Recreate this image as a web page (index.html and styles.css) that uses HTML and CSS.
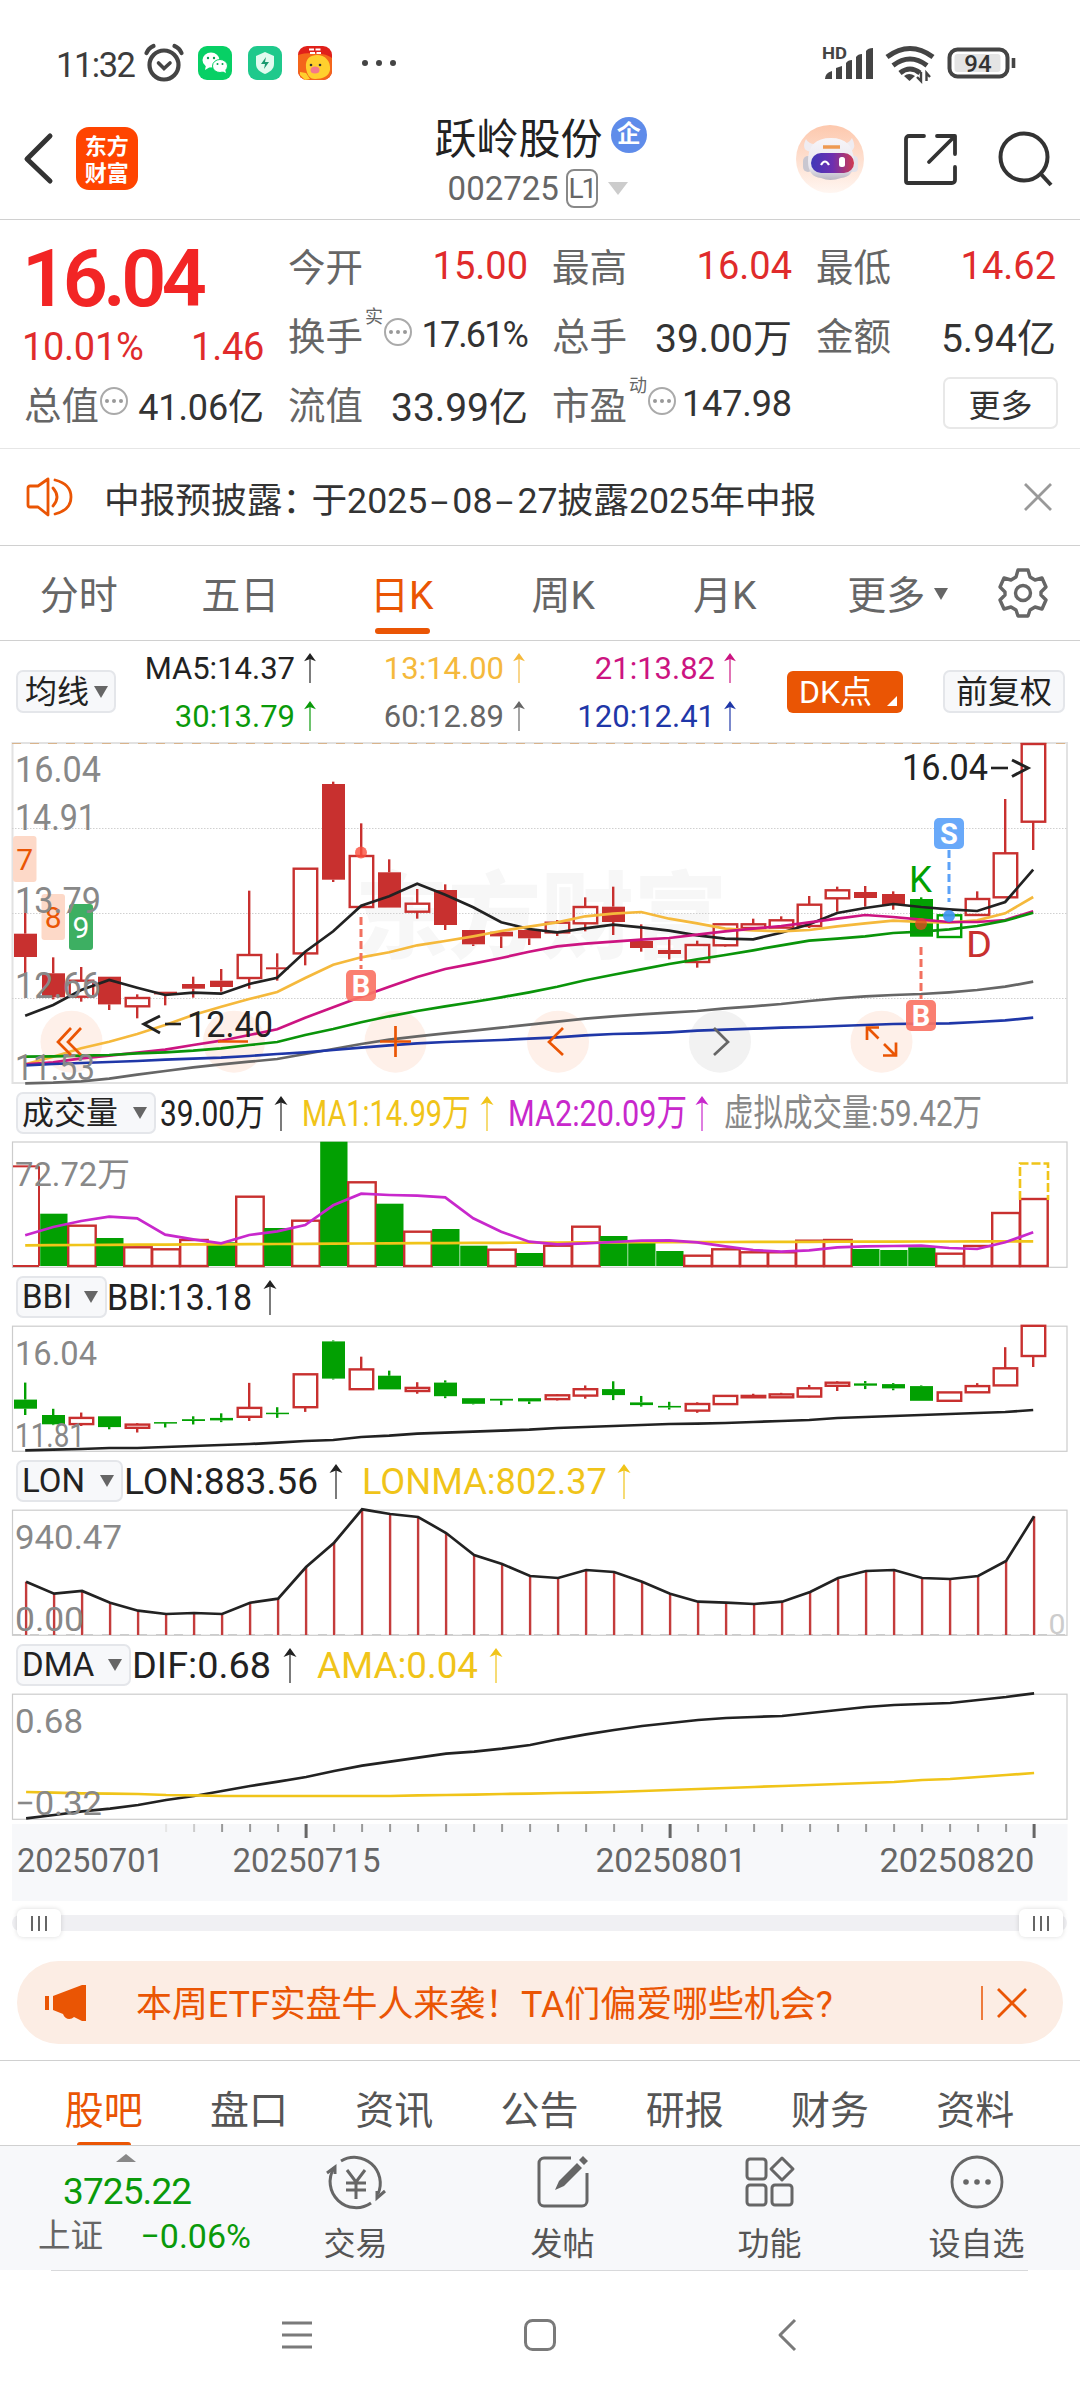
FILE: index.html
```
<!DOCTYPE html>
<html lang="zh-CN">

<head>
    <meta charset="utf-8">
    <title>跃岭股份 002725</title>
    <meta name="viewport" content="width=device-width, initial-scale=1">
    <link rel="stylesheet" href="styles.css">
</head>

<body>
    <div class="status-bar">
        <span class="time">11:32</span>
        <svg class="alarm" width="42" height="42" viewBox="0 0 42 42" fill="none" stroke="#444" stroke-width="4.200" stroke-linecap="round">
            <circle cx="21" cy="23" r="14.5"/>
            <path d="M15.500 21l5.500 5.500 6-5.500" stroke-width="3.600"/><path d="M3.500 11q2-5 7-7M38.500 11q-2-5-7-7"/>
        </svg>
        <svg class="app" width="34" height="34" viewBox="0 0 34 34">
            <rect width="34" height="34" rx="9" fill="#07d065"/>
            <ellipse cx="13" cy="14" rx="8.500" ry="7.500" fill="#fff"/>
            <path d="M8 19l-1 5 5-3z" fill="#fff"/>
            <ellipse cx="22" cy="20" rx="7.500" ry="6.500" fill="#fff" stroke="#07d065"/>
            <path d="M24 25l4 2-1-4z" fill="#fff"/>
            <g fill="#07a050"><circle cx="10" cy="12" r="1.200"/><circle cx="16" cy="12" r="1.200"/><circle cx="19.500" cy="18" r="1"/><circle cx="24.500" cy="18" r="1"/></g>
        </svg>
        <svg class="app" width="34" height="34" viewBox="0 0 34 34">
            <rect width="34" height="34" rx="9" fill="#1fc98c"/>
            <path d="M17 6l9 4v8c0 5-4 8-9 10-5-2-9-5-9-10v-8z" fill="#e2fbf0"/>
            <path d="M18 11l-5 7h4l-1 5 5-7h-4z" fill="#1a9a70"/>
        </svg>
        <svg class="app" width="34" height="34" viewBox="0 0 34 34">
            <rect width="34" height="34" rx="9" fill="#e0201a"/>
            <path d="M0 9C8 6 26 6 34 12v13a9 9 0 0 1-9 9H9a9 9 0 0 1-9-9z" fill="#f4661b"/>
            <path d="M8 22C7 12 13 9 19 9c8 0 14 6 13 15-1 6-7 9-15 9-6 0-8-5-9-11zM2 26l6 1 4 6-5 1-5-5z" fill="#ffd02e"/>
            <ellipse cx="17" cy="24" rx="4.500" ry="3.500" fill="#f5788a"/>
            <circle cx="13" cy="19" r="1.300" fill="#333"/><circle cx="22" cy="19" r="1.300" fill="#333"/>
            <path d="M11 3.500h13M12 7h11" stroke="#fff" stroke-width="2" stroke-dasharray="5 1.500"/>
        </svg>
        <svg class="dots" width="36" height="10" viewBox="0 0 36 10" fill="#444"><circle cx="5" cy="5" r="3"/><circle cx="19" cy="5" r="3"/><circle cx="33" cy="5" r="3"/></svg>
        <svg class="signals" width="200" height="44" viewBox="0 0 200 44">
            <text x="-1" y="18" class="hd" textLength="25" lengthAdjust="spacingAndGlyphs">HD</text>
            <path d="M2 38q0-6 7-8v8zM13 27l6-2v13h-6zM23 22q2-3 6-3v19h-6zM33 16q2-3 6-3v25h-6zM43 10q2-3 7-3v31h-7z" fill="#444"/>
            <g fill="none" stroke="#444" stroke-width="5">
                <path d="M64 16q23-17 46 0M70 24.500q17-13 34 0M77 32q10-8 20 0"/>
            </g>
            <path d="M81 35q5-4 11 0l-5.500 5z" fill="#444"/>
            <path d="M98 31v9l-4-4M103.500 40v-8l3.500 4" fill="none" stroke="#444" stroke-width="2.400"/>
            <rect x="126.500" y="8.500" width="58" height="27" rx="8" fill="#fff" stroke="#444" stroke-width="4"/>
            <rect x="131.500" y="13" width="46" height="18" rx="3" fill="#e4e4e4"/>
            <path d="M190.500 17v10" stroke="#444" stroke-width="3.600"/>
            <text x="155" y="31" class="batt" text-anchor="middle">94</text>
        </svg>
    </div>

    <div class="header">
        <svg class="back" width="32" height="54" viewBox="0 0 32 54" fill="none" stroke="#333" stroke-width="5" stroke-linecap="round" stroke-linejoin="round"><path d="M28 4L5 27l23 22"/></svg>
        <div class="logo">东方<br>财富</div>
        <div class="stock">
            <div class="stock-name">跃岭股份<span class="ent">企</span></div>
            <div class="stock-code">002725<span class="level">L1</span><i class="caret"></i></div>
        </div>
        <svg class="robot" width="68" height="68" viewBox="0 0 68 68">
            <defs>
                <linearGradient id="rb" x1="0" y1="0" x2="0" y2="1"><stop offset="0" stop-color="#fdc8ad"/><stop offset="1" stop-color="#fff6f1"/></linearGradient>
                <linearGradient id="rh" x1="0" y1="0" x2="0" y2="1"><stop offset="0" stop-color="#f7f5f8"/><stop offset=".7" stop-color="#e8e6ee"/><stop offset="1" stop-color="#b9b6c2"/></linearGradient>
                <linearGradient id="rf" x1="0" y1="0" x2="1" y2="0"><stop offset="0" stop-color="#3f37b8"/><stop offset=".5" stop-color="#6d2fb0"/><stop offset="1" stop-color="#d03a50"/></linearGradient>
            </defs>
            <circle cx="34" cy="34" r="34" fill="url(#rb)"/>
            <path d="M10 14q-6 12 6 13l5-8q-8 1-11-5zM56 13q6 12-4 14l-7-8q8 0 11-6z" fill="#efecf1"/>
            <rect x="7" y="31" width="10" height="16" rx="5" fill="#c9c7d0"/>
            <rect x="53" y="31" width="9" height="16" rx="4" fill="#e4e2ea"/>
            <path d="M12 36q0-23 23-23 22 0 23 23 0 16-13 17-11 4-20 0-13-1-13-17z" fill="url(#rh)"/>
            <rect x="15" y="28" width="43" height="20" rx="10" fill="url(#rf)"/>
            <path d="M27 22h17" stroke="#ee9a52" stroke-width="3.500"/>
            <path d="M25 40q4-7 8 0" fill="none" stroke="#fff" stroke-width="2.200"/>
            <rect x="43" y="32" width="6" height="10" rx="2.500" fill="#fff"/>
        </svg>
        <svg class="share" width="54" height="54" viewBox="0 0 54 54" fill="none" stroke="#333" stroke-width="3.800" stroke-linecap="round" stroke-linejoin="round"><path d="M21 4H6a3 3 0 0 0-3 3v42a2 2 0 0 0 2 2h44a3 3 0 0 0 3-3V35M34 4h18v18M51 5L26 30"/></svg>
        <svg class="search" width="56" height="56" viewBox="0 0 56 56" fill="none" stroke="#333" stroke-width="4"><circle cx="26" cy="26" r="23.500"/><path d="M42 42l11 12"/></svg>
    </div>

    <div class="quote">
        <div class="price-col">
            <div class="price">16.04</div>
            <div class="change"><span>10.01%</span><span>1.46</span></div>
            <div class="cell"><label>总值</label><i class="more-dot"><u></u><u></u><u></u></i><b class="tight">41.06亿</b></div>
        </div>
        <div class="grid">
            <div class="cell"><label>今开</label><b class="red">15.00</b></div>
            <div class="cell"><label>最高</label><b class="red">16.04</b></div>
            <div class="cell"><label>最低</label><b class="red">14.62</b></div>
            <div class="cell"><label>换手</label><sup>实</sup><i class="more-dot"><u></u><u></u><u></u></i><b class="tight narrow">17.61%</b></div>
            <div class="cell"><label>总手</label><b class="wide">39.00万</b></div>
            <div class="cell"><label>金额</label><b class="wide">5.94亿</b></div>
            <div class="cell"><label>流值</label><b class="wide">33.99亿</b></div>
            <div class="cell"><label>市盈</label><sup>动</sup><i class="more-dot"><u></u><u></u><u></u></i><b class="tight">147.98</b></div>
            <div class="cell"><button class="more">更多</button></div>
        </div>
    </div>

    <div class="notice">
        <svg width="48" height="40" viewBox="0 0 48 40" fill="none" stroke="#ea5504" stroke-width="2.800" stroke-linejoin="round"><path d="M22 2L12 9H4a2 2 0 0 0-2 2v17a2 2 0 0 0 2 2h8l10 8z"/><path d="M27 11q8 9 0 18M29 3q16 4 16 17t-16 17" stroke-linecap="round"/></svg>
        <p>中报预披露<span class="colon">：</span>于2025<span class="dash">-</span>08<span class="dash">-</span>27披露2025年中报</p>
        <svg width="28" height="28" viewBox="0 0 28 28" stroke="#999" stroke-width="2.800"><path d="M1 1l26 26M27 1L1 27"/></svg>
    </div>

    <div class="period-tabs">
        <span>分时</span><span>五日</span><span class="active">日K</span><span>周K</span><span>月K</span><span>更多<i class="caret"></i></span>
        <svg width="50" height="50" viewBox="0 0 50 50" fill="none" stroke="#666" stroke-width="3.400" stroke-linejoin="round"><circle cx="25" cy="25" r="7.500"/><path d="M20 2h10l2 7 5 3 7-2 4 9-5 5v3l5 5-4 9-7-2-5 3-2 6H20l-2-6-5-3-7 2-4-9 5-5v-3l-5-5 4-9 7 2 5-3z"/></svg>
    </div>

    <div class="ma-bar">
        <div class="pill">均线<i class="caret"></i></div>
        <div class="ma-list">
            <span class="c-black">MA5:14.37<svg class="up"><use href="#arrow"/></svg></span>
            <span class="c-yellow">13:14.00<svg class="up"><use href="#arrow"/></svg></span>
            <span class="c-pink">21:13.82<svg class="up"><use href="#arrow"/></svg></span>
            <span class="c-green">30:13.79<svg class="up"><use href="#arrow"/></svg></span>
            <span class="c-gray">60:12.89<svg class="up"><use href="#arrow"/></svg></span>
            <span class="c-blue">120:12.41<svg class="up"><use href="#arrow"/></svg></span>
        </div>
        <div class="dk">DK点</div>
        <div class="pill fq">前复权</div>
    </div>

    <svg class="defs" width="0" height="0"><symbol id="arrow" viewBox="0 0 14 34"><path d="M7 3v30" stroke="currentColor" stroke-width="1.300"/><path d="M7 0l6.500 9L7 6.500.500 9z" fill="currentColor"/></symbol></svg>

    <svg id="kline" width="1080" height="342" viewBox="0 742 1080 342"></svg>

    <div class="panel-head"><div class="pill">成交量<i class="caret"></i></div><svg id="volHead" class="legend" viewBox="156 1092 924 42"></svg></div>
    <svg id="vol" width="1080" height="126" viewBox="0 1142 1080 126"></svg>

    <div class="panel-head"><div class="pill">BBI<i class="caret"></i></div><svg id="bbiHead" class="legend" viewBox="107 1276 973 42"></svg></div>
    <svg id="bbi" width="1080" height="126" viewBox="0 1326 1080 126"></svg>

    <div class="panel-head"><div class="pill">LON<i class="caret"></i></div><svg id="lonHead" class="legend" viewBox="123 1460 957 42"></svg></div>
    <svg id="lon" width="1080" height="126" viewBox="0 1510 1080 126"></svg>

    <div class="panel-head"><div class="pill">DMA<i class="caret"></i></div><svg id="dmaHead" class="legend" viewBox="131 1644 949 42"></svg></div>
    <svg id="dma" width="1080" height="126" viewBox="0 1694 1080 126"></svg>

    <svg id="axis" width="1080" height="82" viewBox="0 1820 1080 82"></svg>

    <div class="slider">
        <div class="handle"><i></i><i></i><i></i></div>
        <div class="handle"><i></i><i></i><i></i></div>
    </div>

    <div class="banner">
        <svg width="44" height="38" viewBox="0 0 44 38" fill="#ea5504"><path d="M1 12h4v14H1zM9 12L38 1h4v36h-4l-8-4c-3 3-9 3-11-3L9 26z"/></svg>
        <p>本周ETF实盘牛人来袭！TA们偏爱哪些机会?</p>
        <svg class="close" width="48" height="36" viewBox="0 0 48 36" stroke="#ea5504" stroke-width="2.800"><path d="M1 1v34" stroke-width="1.500"/><path d="M17 4l28 28M45 4L17 32"/></svg>
    </div>

    <div class="info-tabs">
        <span class="active">股吧</span><span>盘口</span><span>资讯</span><span>公告</span><span>研报</span><span>财务</span><span>资料</span>
    </div>

    <div class="toolbar">
        <div class="index">
            <i class="caret-up"></i>
            <div class="index-value">3725.22</div>
            <div class="index-row"><span>上证</span><em>−0.06%</em></div>
        </div>
        <div class="tool">
            <svg width="62" height="56" viewBox="0 0 62 56" fill="none" stroke="#666" stroke-width="3"><path d="M16 7a26 26 0 0 1 37 33M46 49A26 26 0 0 1 9 14"/><path d="M2 19l8-6v7M60 37l-8 7v-7" /><path d="M22 16l9 12 9-12M31 28v17M21 29h20M21 36h20"/></svg>
            <span>交易</span>
        </div>
        <div class="tool">
            <svg width="56" height="56" viewBox="0 0 56 56" fill="none" stroke="#666" stroke-width="3"><path d="M36 4H9a5 5 0 0 0-5 5v38a5 5 0 0 0 5 5h38a5 5 0 0 0 5-5V19"/><path d="M20 36l4-9L42 9l5 5-18 18zM44 6l4-4 5 5-4 4z" fill="#666" stroke="none"/></svg>
            <span>发帖</span>
        </div>
        <div class="tool">
            <svg width="56" height="56" viewBox="0 0 56 56" fill="none" stroke="#666" stroke-width="3"><rect x="5" y="5" width="19" height="20" rx="3"/><rect x="5" y="31" width="19" height="20" rx="3"/><rect x="30" y="31" width="20" height="20" rx="3"/><path d="M40 4l11 11-11 11-11-11z" stroke-linejoin="round"/></svg>
            <span>功能</span>
        </div>
        <div class="tool">
            <svg width="56" height="56" viewBox="0 0 56 56" fill="none" stroke="#666" stroke-width="2.800"><circle cx="28" cy="28" r="25"/><g fill="#666" stroke="none"><circle cx="17" cy="28" r="2.800"/><circle cx="28" cy="28" r="2.800"/><circle cx="39" cy="28" r="2.800"/></g></svg>
            <span>设自选</span>
        </div>
    </div>

    <div class="sys-nav">
        <svg width="32" height="32" viewBox="0 0 32 32" stroke="#7a7a7a" stroke-width="3"><path d="M1 4h30M1 16h30M1 28h30"/></svg>
        <svg width="34" height="34" viewBox="0 0 34 34" fill="none" stroke="#7a7a7a" stroke-width="3"><rect x="2.500" y="2.500" width="29" height="29" rx="7"/></svg>
        <svg width="20" height="34" viewBox="0 0 20 34" fill="none" stroke="#7a7a7a" stroke-width="3" stroke-linejoin="round"><path d="M18 2L3 17l15 15"/></svg>
    </div>

    <script src="script.js"></script>
</body>

</html>
```
FILE: styles.css
```
* {
    box-sizing: border-box;
}

body {
    margin: 0;
    width: 1080px;
    height: 2400px;
    overflow: hidden;
    background: #fff;
    color: #333;
    font-family: Roboto, "Noto Sans CJK SC", sans-serif;
}

svg {
    display: block;
    flex: none;
    overflow: visible;
}

p {
    margin: 0;
}

i, em, b {
    font-style: normal;
    font-weight: normal;
}

text {
    font-family: Roboto, "Noto Sans CJK SC", sans-serif;
}

.defs {
    position: absolute;
}

.caret {
    display: inline-block;
    border: 7px solid transparent;
    border-top: 12px solid #666;
    border-bottom: 0;
}

/* status bar */
.status-bar {
    display: flex;
    align-items: center;
    height: 112px;
    padding: 14px 0 0 56px;
    color: #3c3c3c;
}

.time {
    width: 87px;
    font-size: 34.5px;
    letter-spacing: -1.5px;
    white-space: nowrap;
    padding-top: 3px;
}

.alarm {
    margin-right: 13px;
}

.app {
    margin-right: 16px;
}

.dots {
    margin-left: 12px;
}

.signals {
    margin-left: 427px;
}

.hd {
    font-size: 16px;
    font-weight: 700;
    fill: #444;
}

.batt {
    font-size: 24px;
    font-weight: 500;
    fill: #333;
}

/* header */
.header {
    display: flex;
    align-items: center;
    height: 108px;
    padding: 0 26px 14px 22px;
    border-bottom: 1px solid #d0d0d0;
}

.logo {
    width: 62px;
    height: 63px;
    margin-left: 22px;
    padding-top: 4px;
    border-radius: 13px;
    background: #ff4400;
    color: #fff;
    font: bold 22px/27px "Noto Sans CJK SC", sans-serif;
    text-align: center;
}

.stock {
    width: 300px;
    margin-left: 254px;
    padding-left: 43px;
}

.stock-name {
    display: flex;
    align-items: center;
    height: 50px;
    color: #222;
    font-size: 42px;
    white-space: nowrap;
}

.ent {
    width: 36px;
    height: 36px;
    margin: -1px 0 0 8px;
    border-radius: 50%;
    background: #5f8cea;
    color: #fff;
    font-size: 24px;
    font-weight: bold;
    line-height: 34px;
    text-align: center;
}

.stock-code {
    display: flex;
    align-items: center;
    height: 46px;
    margin-left: 13px;
    padding-top: 10px;
    color: #666;
    font-size: 33px;
}

.level {
    width: 32px;
    height: 39px;
    margin: 0 10px 0 7px;
    border: 2px solid #888;
    border-radius: 8px;
    font-size: 28px;
    line-height: 36px;
    letter-spacing: -2px;
    text-align: center;
}

.stock-code .caret {
    border-width: 13px 10px 0;
    border-top-color: #ccc;
}

.robot {
    margin-left: 106px;
}

.share {
    margin-left: 39px;
}

.search {
    margin-left: 41px;
}

/* quote */
.quote {
    display: flex;
    height: 229px;
    padding: 10px 24px 0 24px;
    border-bottom: 1px solid #e6e6e6;
}

.price-col {
    width: 240px;
    margin-right: 24px;
}

.price {
    height: 90px;
    margin-left: -2px;
    color: #f22525;
    font-size: 79px;
    font-weight: 600;
    line-height: 98px;
    letter-spacing: -4.5px;
}

.change {
    display: flex;
    justify-content: space-between;
    height: 48px;
    margin-left: -2px;
    padding-top: 4px;
    color: #e02b2b;
    font-size: 38px;
    line-height: 46px;
    letter-spacing: -0.3px;
}

.price-col .cell {
    height: 69px;
}

.grid {
    flex: 1;
    display: grid;
    grid-template-columns: 240px 240px 240px;
    grid-template-rows: 69px 69px 69px;
    column-gap: 24px;
}

.cell {
    display: flex;
    align-items: center;
    white-space: nowrap;
}

.cell label {
    color: #666;
    font-size: 37.5px;
}

.cell b {
    margin-left: auto;
    padding-top: 2px;
    font-size: 38px;
}

.cell .tight {
    font-size: 36px;
    letter-spacing: -0.1px;
}

.cell .narrow {
    letter-spacing: -1.9px;
    padding-right: 1px;
}

.cell .wide {
    font-size: 39px;
}

.cell .red {
    color: #e02b2b;
}

.cell sup {
    width: 18px;
    margin: -34px 0 0 2px;
    color: #666;
    font-size: 18px;
    line-height: 18px;
}

.more-dot {
    display: flex;
    justify-content: center;
    align-items: center;
    gap: 3px;
    width: 28px;
    height: 28px;
    margin: -4px 0 0 1px;
    border: 2px solid #aaa;
    border-radius: 50%;
}

.more-dot u {
    width: 4px;
    height: 4px;
    border-radius: 50%;
    background: #999;
}

.more {
    width: 115px;
    height: 52px;
    margin-left: auto;
    padding: 0;
    border: 2px solid #e8e8e8;
    border-radius: 7px;
    background: #fff;
    color: #333;
    font: 32px Roboto, "Noto Sans CJK SC", sans-serif;
}

.grid .cell:last-child {
    margin-right: -2px;
}

/* notice */
.notice {
    display: flex;
    align-items: center;
    height: 97px;
    padding: 0 28px 0 26px;
    border-bottom: 1px solid #d0d0d0;
    font-size: 35.700px;
}

.notice p {
    flex: 1;
    margin-left: 30px;
    white-space: nowrap;
}

.colon {
    display: inline-block;
    width: 29px;
    overflow: hidden;
    vertical-align: bottom;
}

.dash {
    display: inline-block;
    width: 25px;
    text-align: center;
    transform: scaleX(1.8);
}

/* period tabs */
.period-tabs {
    display: flex;
    align-items: center;
    height: 95px;
    border-bottom: 1px solid #d0d0d0;
    color: #666;
    font-size: 39px;
}

.period-tabs span {
    position: relative;
    left: -2px;
    width: 161.500px;
    height: 93px;
    line-height: 98px;
    text-align: center;
    white-space: nowrap;
}

.period-tabs .caret {
    position: absolute;
    left: 128px;
    top: 41px;
}

.period-tabs .active, .info-tabs .active {
    color: #ea5504;
}

.period-tabs .active::after {
    content: "";
    position: absolute;
    left: 54px;
    bottom: 6px;
    width: 55px;
    height: 6px;
    border-radius: 3px;
    background: #ea5504;
}

.period-tabs svg {
    margin-left: 29px;
}

/* moving averages */
.ma-bar {
    display: flex;
    align-items: center;
    height: 101px;
    padding-left: 16px;
}

.pill {
    display: flex;
    align-items: center;
    height: 43px;
    padding: 0 6px 0 7px;
    border: 2px solid #e4e6ea;
    border-radius: 7px;
    background: #f7f8fa;
    color: #222;
    font-size: 32px;
    line-height: 38px;
    white-space: nowrap;
}

.ma-bar .pill {
    width: 100px;
    justify-content: space-between;
}

.ma-list {
    display: grid;
    grid-template-columns: 201px 209px 211px;
    width: 621px;
    padding-top: 3px;
    font-size: 31px;
    line-height: 48px;
    text-align: right;
}

.ma-list span {
    display: flex;
    justify-content: flex-end;
    align-items: center;
}

.up {
    width: 14px;
    height: 31px;
    margin-left: 8px;
    margin-top: -2px;
}

.c-black { color: #222; }
.c-yellow { color: #f5b93c; }
.c-pink { color: #cc1481; }
.c-green { color: #0a9a0a; }
.c-gray { color: #666; }
.c-blue { color: #1f37a8; }

.dk {
    position: relative;
    width: 116px;
    height: 42px;
    margin-left: 50px;
    padding-left: 12px;
    border-radius: 6px;
    background: #ea5504;
    color: #fff;
    font-size: 32px;
    line-height: 42px;
}

.dk::after {
    content: "";
    position: absolute;
    right: 6px;
    bottom: 7px;
    border: 5px solid transparent;
    border-right-color: #fff;
    border-bottom-color: #fff;
}

.ma-bar .fq {
    width: 122px;
    margin-left: 40px;
    justify-content: center;
    padding: 0;
}

/* indicator panels */
.panel-head {
    display: flex;
    height: 58px;
    padding: 8px 0 0 16px;
}

.panel-head .pill {
    height: 42px;
    padding: 0 7px 0 4px;
}

.panel-head .caret {
    margin-left: auto;
}

.panel-head .pill:has(+ #volHead) { width: 140px; }
.panel-head .pill:has(+ #bbiHead) { width: 91px; font-size: 33px; }
.panel-head .pill:has(+ #lonHead) { width: 107px; font-size: 33px; }
.panel-head .pill:has(+ #dmaHead) { width: 115px; font-size: 33px; }

.legend {
    flex: 1;
    height: 42px;
}

.slider {
    display: flex;
    justify-content: space-between;
    align-items: center;
    height: 16px;
    margin: 13px 13px 0 12px;
    padding: 0 4px 0 5px;
    border-radius: 8px;
    background: #f0f0f3;
}

.handle {
    display: flex;
    justify-content: center;
    align-items: center;
    gap: 5px;
    width: 44px;
    height: 28px;
    border-radius: 6px;
    background: #fff;
    box-shadow: 0 0 5px rgba(0, 0, 0, 0.15);
}

.handle i {
    width: 2px;
    height: 15px;
    background: #666;
}

/* banner */
.banner {
    display: flex;
    align-items: center;
    height: 83px;
    margin: 30px 17px 16px;
    padding: 0 34px 0 27px;
    border-radius: 42px;
    background: #fcede4;
    color: #ea5504;
    font-size: 36px;
}

.banner p {
    flex: 1;
    margin: -3px 0 0 48px;
    letter-spacing: -0.1px;
    white-space: nowrap;
}

.info-tabs {
    display: flex;
    height: 86px;
    padding: 0 32px 0 31px;
    border-top: 1px solid #d0d0d0;
    border-bottom: 1px solid #d0d0d0;
    color: #555;
    font-size: 39px;
    line-height: 100px;
}

.info-tabs span {
    flex: 1;
    position: relative;
    text-align: center;
}

.info-tabs .active::after {
    content: "";
    position: absolute;
    left: 46px;
    bottom: 0;
    width: 54px;
    height: 3px;
    border-radius: 3px 3px 0 0;
    background: #ea5504;
}

/* toolbar */
.toolbar {
    position: relative;
    display: flex;
    height: 124px;
    background: #f7f8fa;
}

.toolbar::after {
    content: "";
    position: absolute;
    left: 51px;
    right: 52px;
    bottom: -1px;
    height: 1px;
    background: #d8d9db;
}

.index {
    width: 252px;
    color: #0a9a0a;
}

.caret-up {
    display: block;
    width: 0;
    margin: 8px 0 0 116px;
    border: 10px solid transparent;
    border-top: 0;
    border-bottom: 8px solid #888;
}

.index-value {
    height: 48px;
    padding-left: 63px;
    font-size: 37px;
    line-height: 60px;
    letter-spacing: -0.9px;
}

.index-row {
    display: flex;
    justify-content: space-between;
    padding-left: 38px;
    font-size: 32.5px;
    line-height: 52px;
}

.index-row span {
    color: #666;
}

.index-row em {
    padding-right: 1px;
    font-size: 34px;
}

.tool {
    display: flex;
    flex-direction: column;
    align-items: center;
    width: 207px;
    padding-top: 8px;
    color: #555;
    font-size: 32px;
    line-height: 48px;
}

.tool span {
    margin-top: 10px;
}

/* android nav */
.sys-nav {
    display: flex;
    align-items: center;
    height: 130px;
    padding-left: 281px;
}

.sys-nav svg:nth-child(2) {
    margin-left: 210px;
}

.sys-nav svg:nth-child(3) {
    margin-left: 220px;
}
```
FILE: script.js
```
var RED = '#c8302f', GREEN = '#02a002';

// one column per trading day
function cx(i) {
    return 25.2 + i * 28;
}

function rect(x, y, w, h, attrs) {
    return '<rect x="' + x.toFixed(1) + '" y="' + y.toFixed(1) + '" width="' + w + '" height="' + h.toFixed(1) + '" ' + attrs + '/>';
}

function seg(x1, y1, x2, y2, color, w, extra) {
    return '<path d="M' + x1 + ' ' + y1 + 'L' + x2 + ' ' + y2 + '" stroke="' + color + '" stroke-width="' + w + '" ' + (extra || '') + '/>';
}

function line(vals, top, color, dx, w) {
    var pts = vals.map(function(v, i) {
        return (cx(i) + (dx || 0)).toFixed(1) + ',' + (top + v / 3).toFixed(1);
    });
    return '<polyline points="' + pts.join(' ') + '" fill="none" stroke="' + color + '" stroke-width="' + (w || 2.7) + '"/>';
}

function text(x, y, w, str, size, color, extra) {
    return '<text x="' + x + '" y="' + y + '" textLength="' + w + '" lengthAdjust="spacingAndGlyphs" font-size="' + size + '" fill="' + color + '" ' + (extra || '') + '>' + str + '</text>';
}

function arrow(x, y, color) {
    return seg(x, y + 3, x, y + 35, color, 1.2) + '<path d="M' + x + ' ' + y + 'l6.500 9-6.500-2.500-6.500 2.500z" fill="' + color + '"/>';
}

function box(y1, y2, color) {
    return '<rect x="12.500" y="' + y1 + '" width="1054.500" height="' + (y2 - y1) + '" fill="none" stroke="' + color + '" stroke-width="1.200"/>';
}

function put(id, parts) {
    document.getElementById(id).innerHTML = parts.join('');
}

// type (f = filled, h = hollow, g = green filled, o = green hollow), high, top, bottom, low
var candles = [
    ['f', 480, 611, 681, 730], ['f', 682, 730, 802, 808], ['h', 711, 752, 800, 815], ['f', 740, 740, 823, 840],
    ['h', 793, 804, 829, 865], ['f', 785, 785, 793, 826], ['f', 740, 762, 776, 803], ['f', 717, 752, 771, 785],
    ['h', 482, 675, 744, 776], ['f', 670, 712, 718, 752], ['h', 416, 416, 670, 706], ['f', 155, 162, 449, 456],
    ['h', 280, 378, 531, 531], ['f', 388, 427, 533, 533], ['h', 477, 521, 545, 566], ['f', 463, 480, 585, 600],
    ['f', 600, 600, 643, 648], ['f', 605, 605, 619, 654], ['f', 600, 600, 625, 645], ['h', 570, 578, 607, 618],
    ['h', 502, 531, 580, 604], ['f', 470, 530, 576, 615], ['f', 583, 633, 654, 665], ['f', 628, 660, 672, 688],
    ['h', 632, 645, 696, 713], ['h', 582, 583, 646, 650], ['h', 566, 583, 594, 594], ['h', 559, 571, 593, 593],
    ['h', 498, 524, 588, 594], ['h', 470, 481, 505, 545], ['f', 468, 486, 504, 530], ['f', 484, 492, 525, 539],
    ['g', 502, 507, 620, 620], ['o', 556, 556, 621, 621], ['h', 484, 507, 555, 555], ['h', 207, 370, 502, 502],
    ['h', 42, 42, 275, 360]
];

function drawCandles(map, down) {
    return candles.map(function(c, i) {
        var hollow = c[0] === 'h' || (c[0] === 'o');
        var color = c[0] === 'h' ? RED : c[0] === 'f' ? down : GREEN;
        if (down === GREEN && c[0] === 'o') color = RED;
        var x = cx(i), hi = map(c[1]), t = map(c[2]), b = map(c[3]), lo = map(c[4]);
        var s = '';
        if (hi < t) s += seg(x, hi, x, t, color, 2.4);
        if (lo > b) s += seg(x, b, x, lo, color, 2.4);
        if (hollow) s += rect(x - 11.5, t, 23.5, b - t, 'fill="none" stroke="' + color + '" stroke-width="2.400"');
        else s += rect(x - 11.2, t, 23, Math.max(b - t, 1.5), 'fill="' + color + '"');
        return s;
    }).join('');
}

function tag(x, y, w, h, bg, str, color, size) {
    return rect(x, y, w, h, 'rx="3" fill="' + bg + '"') +
        '<text x="' + (x + w / 2) + '" y="' + (y + h / 2 + size * 0.36) + '" text-anchor="middle" font-size="' + size + '" fill="' + color + '">' + str + '</text>';
}

function marker(x, y, color, str) {
    return rect(x - 15, y, 30, 31, 'rx="5" fill="' + color + '" fill-opacity=".92"') +
        '<text x="' + x + '" y="' + (y + 25.5) + '" text-anchor="middle" font-size="29" font-weight="700" fill="#fff">' + str + '</text>';
}

function circle(x, y, r, color, extra) {
    return '<circle cx="' + x + '" cy="' + y + '" r="' + r + '" fill="' + color + '" ' + (extra || '') + '/>';
}

var ma5 = [857, 825, 780, 750, 773, 795, 788, 791, 762, 743, 665, 604, 527, 499, 461, 494, 532, 577, 597, 607, 595, 584, 592, 602, 616, 626, 628, 608, 583, 549, 534, 522, 531, 538, 543, 516, 419];
var ma13 = [1003, 980, 955, 935, 912, 885, 855, 830, 807, 786, 744, 704, 682, 667, 646, 633, 619, 603, 590, 577, 559, 551, 546, 566, 580, 596, 601, 604, 600, 589, 580, 572, 576, 578, 571, 550, 501];
var ma21 = [1003, 997, 985, 977, 968, 959, 945, 932, 915, 898, 863, 832, 800, 770, 741, 717, 701, 684, 665, 649, 641, 635, 629, 624, 614, 604, 596, 588, 577, 566, 555, 561, 569, 576, 576, 570, 544];
var ma30 = [980, 979, 977, 975, 970, 967, 962, 955, 945, 936, 915, 897, 877, 859, 843, 829, 816, 802, 787, 770, 751, 734, 718, 702, 688, 675, 661, 646, 632, 626, 619, 609, 605, 598, 588, 572, 548];
var ma60 = [1060, 1058, 1054, 1046, 1034, 1023, 1012, 1003, 995, 987, 972, 957, 942, 929, 919, 910, 902, 893, 884, 875, 866, 859, 853, 848, 843, 835, 829, 822, 813, 805, 799, 795, 792, 787, 780, 770, 755];
var ma120 = [1006, 1002, 999, 996, 993, 989, 986, 983, 978, 972, 967, 960, 953, 946, 940, 936, 933, 930, 926, 922, 916, 912, 910, 907, 902, 899, 896, 893, 891, 888, 885, 882, 881, 880, 876, 871, 863];

var dash = 'stroke-dasharray="8 4"';
var grid = [828.5, 913.5, 998.5].map(function(y) {
    return seg(12, y, 1067, y, '#d0d0d0', 1, 'stroke-dasharray="1.500 1.500"');
}).join('');

put('kline', [
    text(355, 951, 372, '东方财富', 94, '#f7f7f7', 'font-weight="900"'),
    '<rect x="12.500" y="743" width="1054.500" height="340" fill="none" stroke="#e2e2e2" stroke-width="2"/>', grid,
    seg(12, 743.5, 1067, 743.5, '#d9b48c', 1, 'stroke-dasharray="9 9"'),
    circle(71.5, 1041.7, 31, '#fef0e9'), circle(234, 1041.7, 31, '#fef0e9'), circle(395.5, 1041.7, 31, '#fef0e9'),
    circle(558, 1041.7, 31, '#fef0e9'), circle(720, 1041.7, 31, '#f2f2f2'), circle(881.5, 1041.7, 31, '#fef0e9'),
    drawCandles(function(v) { return 730 + v / 3; }, RED),
    tag(13, 836, 23.5, 46, '#fdd9c8', '7', '#ea5504', 30),
    tag(41.500, 894, 23.5, 46, '#fdd9c8', '8', '#ea5504', 30),
    tag(69, 904, 24, 46, '#3daf62', '9', '#fff', 30),
    line(ma5, 730, '#222'), line(ma13, 730, '#f5b93c'), line(ma21, 730, '#cc1481'),
    line(ma30, 730, '#0a940a'), line(ma60, 730, '#666'), line(ma120, 730, '#1f37a8'),
    text(15, 781.7, 86, '16.04', 36.5, '#888'), text(15, 830, 81, '14.91', 36.5, '#888'),
    text(15, 912.5, 86, '13.79', 36.5, '#888'), text(15, 998, 86, '12.66', 36.5, '#888'),
    text(15, 1079.5, 80, '11.53', 36.5, '#888'),
    seg(361, 917, 361, 969, '#f2705f', 3, dash), marker(361, 970, '#fa7465', 'B'), circle(361, 852.5, 6, '#fa4e3c', 'fill-opacity=".8"'),
    seg(949, 850, 949, 902, '#5ca2f8', 3, dash), marker(949, 818, '#5ca2f8', 'S'), circle(949, 916, 6, '#3f94f5', 'fill-opacity=".9"'),
    seg(921, 947, 921, 999, '#f2705f', 3, dash), marker(921, 1000, '#fa7465', 'B'), circle(921, 924, 6, '#dd4a20', 'fill-opacity=".8"'),
    text(909, 892, 23, 'K', 36, '#02a002'), text(966, 957, 26, 'D', 36, '#c8302f'),
    text(902, 780, 86, '16.04', 36.5, '#222'), seg(991, 768, 1008, 768, '#222', 2.6),
    '<path d="M1012 760l16 8-16 8.500" fill="none" stroke="#222" stroke-width="3"/>',
    text(187, 1036.5, 86, '12.40', 36.5, '#222'), seg(165, 1024, 181, 1024, '#222', 2.6),
    '<path d="M160 1016l-16 8 16 9" fill="none" stroke="#222" stroke-width="3"/>',
    '<g fill="none" stroke="#ea5504" stroke-width="2.700">',
    '<path d="M71 1028l-13 14 13 13M81 1028l-13 14 13 13M218 1041.500h30M380 1041.500h31M395.500 1026v31M563 1028l-14 14 14 13"/>',
    '<path d="M878.500 1038.500l-11-11M867 1040v-12.500h12M884 1044l12 12M883 1055.500h13v-13"/>',
    '</g><path d="M714 1028l14 14-14 13" fill="none" stroke="#666" stroke-width="2.700"/>'
]);

// volume bars
var vol = 'h259 g401 h437 g474 h502 h508 h480 g487 h350 g444 h422 g185 h307 g371 h455 g447 g497 h509 g519 h497 h440 g468 g488 g513 h527 h508 h517 h517 h482 h480 g507 g510 g502 h521 h498 h399 h357'.split(' ');
var volMa1 = vol.map(function(v, i) { return i < 20 ? 496 - i * 0.45 : 487 - (i - 20) * 0.2; });
var volMa2 = [466, 441, 423, 410, 415, 464, 478, 490, 465, 454, 435, 376, 341, 345, 347, 352, 415, 455, 485, 493, 490, 486, 482, 481, 487, 499, 510, 515, 511, 502, 499, 498, 497, 504, 507, 487, 457];

put('vol', [
    box(1142, 1267.3, '#ccc'),
    vol.map(function(v, i) {
        var y = 1080 + parseInt(v.slice(1), 10) / 3, x = cx(i);
        if (v[0] === 'g') return rect(x + 0.8 - 13.8, y, 27.3, 1266 - y, 'fill="' + GREEN + '"');
        if (i === 0) return seg(13, y, 39, y, RED, 2) + seg(39, y, 39, 1266, RED, 2) + seg(13, 1266, 39, 1266, RED, 2);
        return rect(x - 13, y, 27.5, 1266 - y, 'fill="none" stroke="' + RED + '" stroke-width="2.400"');
    }).join(''),
    '<path d="M1020 1200v-36.500h28v36.500" fill="none" stroke="#f0c419" stroke-width="2.600" stroke-dasharray="9 3"/>',
    line(volMa1, 1080, '#f0c419'), line(volMa2, 1080, '#c828cc'),
    text(15, 1186, 115, '72.72万', 33.5, '#888')
]);
put('volHead', [
    text(160, 1126, 105, '39.00万', 37, '#222'), arrow(281, 1096, '#222'),
    text(302, 1126, 169, 'MA1:14.99万', 37, '#f0c419'), arrow(487, 1096, '#f0c419'),
    text(508, 1126, 179, 'MA2:20.09万', 37, '#c828cc'), arrow(702, 1096, '#c828cc'),
    text(724, 1126, 258, '虚拟成交量:59.42万', 37, '#888')
]);

// BBI
var bbi = [1111, 1109, 1107, 1104, 1104, 1101, 1098, 1095, 1092, 1088, 1083, 1080, 1071, 1067, 1061, 1058, 1055, 1052, 1049, 1044, 1041, 1038, 1035, 1032, 1031, 1029, 1026, 1023, 1020, 1014, 1011, 1008, 1005, 1002, 999, 996, 990];
put('bbi', [
    box(1326.2, 1451.3, '#ccc'),
    drawCandles(function(v) { return 1080 + (737 + 0.389 * (v - 41)) / 3; }, GREEN),
    line(bbi, 1080, '#222'),
    text(15, 1365, 82, '16.04', 33.5, '#888'), text(15, 1447, 70, '11.81', 33.5, '#888')
]);
put('bbiHead', [text(107, 1310, 145, 'BBI:13.18', 37, '#222'), arrow(270, 1280, '#222')]);

// LON
var lon = [380, 416, 408, 443, 467, 477, 474, 477, 443, 431, 336, 263, 163, 177, 186, 234, 300, 327, 363, 369, 345, 351, 380, 416, 440, 443, 447, 440, 411, 369, 348, 345, 369, 372, 363, 318, 184];
put('lon', [
    box(1510.2, 1635.3, '#ccc'),
    seg(12, 1634.5, 1067, 1634.5, '#ccc', 1, 'stroke-dasharray="9 9"'),
    lon.map(function(v, i) { return seg(cx(i) + 0.9, 1455 + v / 3, cx(i) + 0.9, 1635, '#c43c3c', 2.4); }).join(''),
    line(lon, 1455, '#222', 0.9),
    text(15, 1548.5, 107, '940.47', 33.5, '#888'), text(15, 1631, 69, '0.00', 33.5, '#888'),
    text(1048.5, 1634, 17, '0', 28, '#ccc')
]);
put('lonHead', [
    text(124, 1494, 194, 'LON:883.56', 37, '#222'), arrow(336, 1464, '#222'),
    text(362, 1494, 245, 'LONMA:802.37', 37, '#f0c419'), arrow(624, 1464, '#f0c419')
]);

// DMA
var dif = [1090, 1080, 1069, 1061, 1050, 1035, 1023, 1008, 993, 980, 966, 948, 932, 920, 908, 896, 890, 881, 870, 853, 838, 825, 813, 804, 795, 789, 786, 783, 774, 765, 756, 750, 747, 744, 735, 726, 715];
var ama = [1011, 1013, 1015, 1016, 1017, 1020, 1021, 1023, 1023, 1023, 1023, 1023, 1023, 1023, 1021, 1020, 1019, 1017, 1016, 1014, 1013, 1011, 1008, 1005, 1002, 999, 996, 993, 990, 987, 984, 981, 975, 972, 966, 960, 954];
put('dma', [
    box(1694.2, 1819.3, '#ccc'),
    line(dif, 1455, '#222', 0.9), line(ama, 1455, '#f0c419', 0.9),
    text(15, 1732.5, 68, '0.68', 33.5, '#888'), text(15, 1814.5, 87, '−0.32', 33.5, '#888')
]);
put('dmaHead', [
    text(132, 1678, 139, 'DIF:0.68', 37, '#222'), arrow(290, 1648, '#222'),
    text(317, 1678, 161, 'AMA:0.04', 37, '#f0c419'), arrow(496, 1648, '#f0c419')
]);

// time axis
var ticks = '';
for (var i = 5; i < 37; i++) {
    var major = i === 10 || i === 23 || i === 36;
    ticks += seg(cx(i) + 0.9, 1824, cx(i) + 0.9, major ? 1838 : 1832, i === 5 ? '#e6e6e6' : i === 6 ? '#ccc' : major ? '#666' : '#999', major ? 3 : 2);
}
put('axis', [
    rect(12, 1824, 1055.5, 77, 'fill="#f7f8fa"'), ticks,
    text(17, 1872, 147, '20250701', 33.5, '#666'), text(232.5, 1872, 148, '20250715', 33.5, '#666'),
    text(595.5, 1872, 151, '20250801', 33.5, '#666'), text(879.5, 1872, 155, '20250820', 33.5, '#666')
]);
```
